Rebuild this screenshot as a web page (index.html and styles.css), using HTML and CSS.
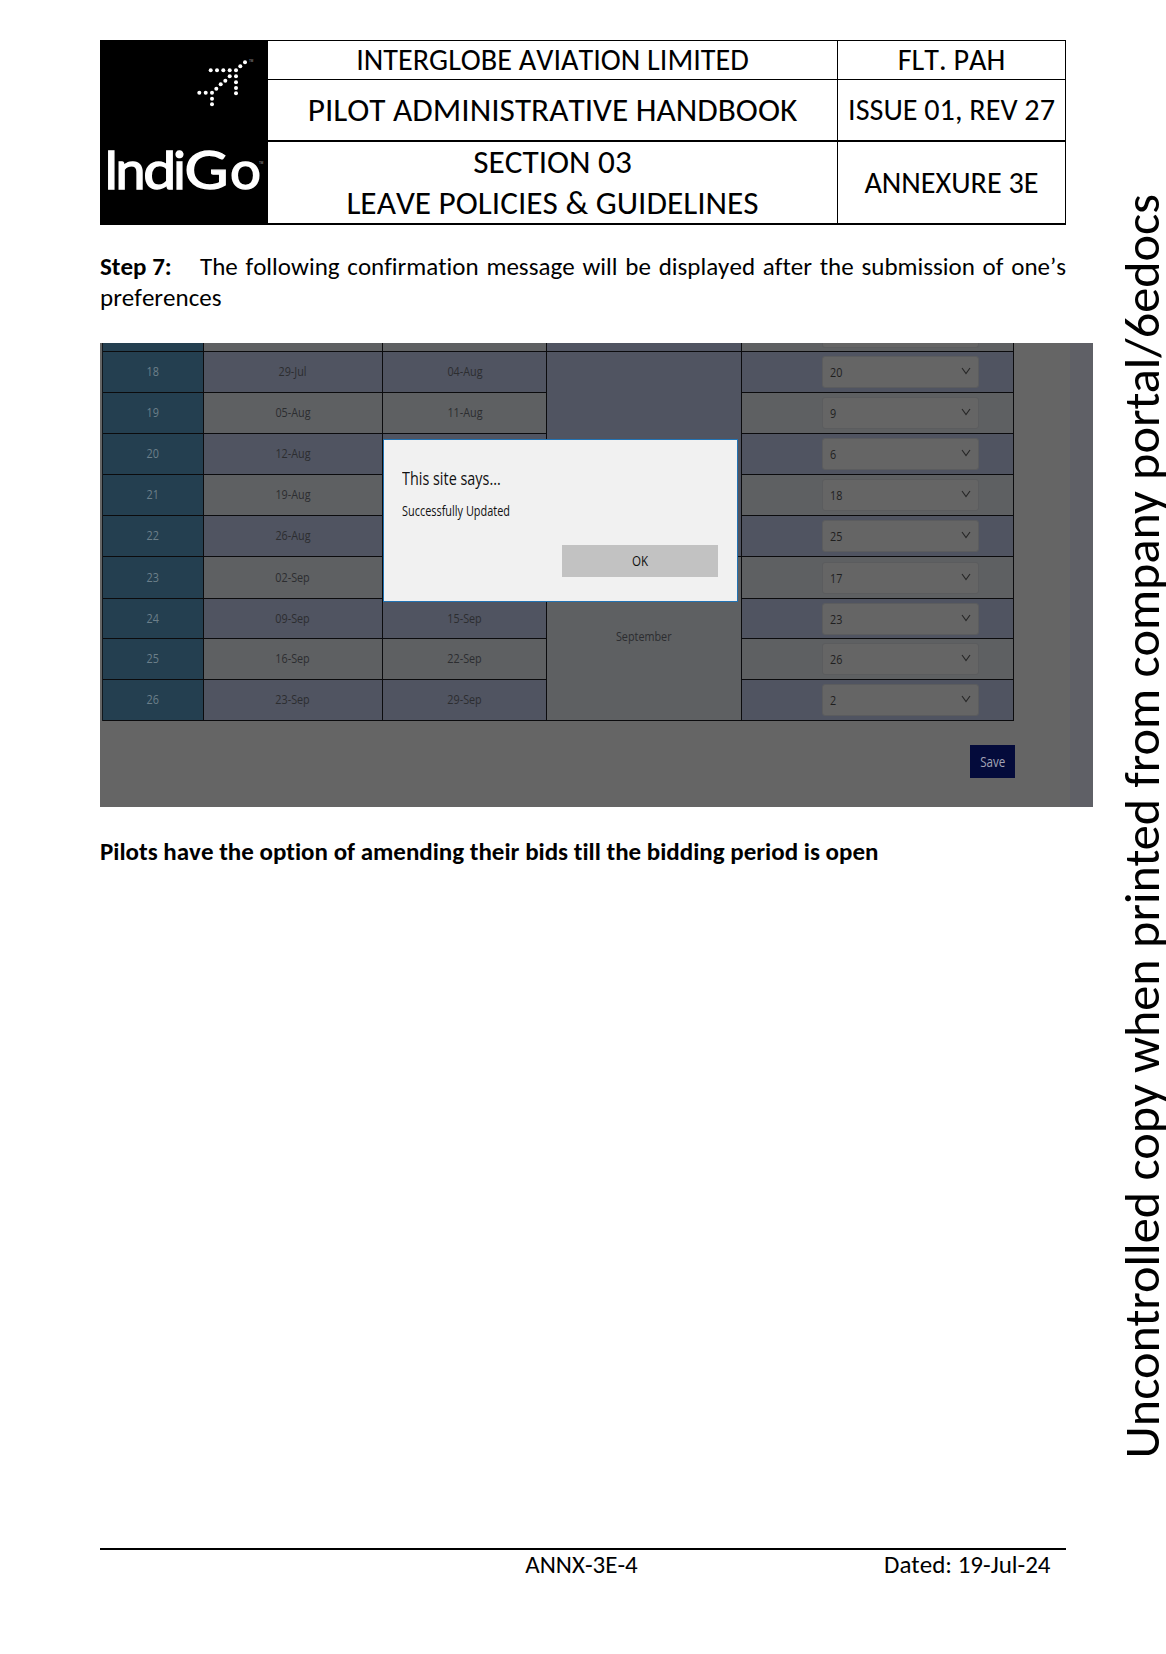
FILE: index.html
```
<!DOCTYPE html>
<html lang="en">
<head>
<meta charset="utf-8">
<title>Pilot Administrative Handbook - Annexure 3E</title>
<link rel="stylesheet" href="styles.css">
</head>
<body>
<div class="page">
  <main class="sheet">
    <header class="masthead">
      <div class="logo">
        <svg viewBox="0 0 168 184" width="168" height="184" role="img" aria-label="IndiGo">
          <g class="logo-dots">
            <circle cx="145" cy="22.3" r="2"/><circle cx="140.3" cy="26.3" r="2"/><circle cx="136" cy="30.3" r="2"/>
            <circle cx="129.7" cy="30.3" r="2"/><circle cx="123.3" cy="30.3" r="2"/><circle cx="117" cy="30.3" r="2"/><circle cx="110.7" cy="30.3" r="2"/>
            <circle cx="136" cy="36.3" r="2"/><circle cx="136" cy="42.3" r="2"/><circle cx="136" cy="48" r="2"/><circle cx="136" cy="53.3" r="2"/>
            <circle cx="129.7" cy="36.3" r="2"/><circle cx="125.3" cy="40.7" r="2"/><circle cx="120.7" cy="44.3" r="2"/><circle cx="116.3" cy="48.7" r="2"/>
            <circle cx="112" cy="52.7" r="2"/><circle cx="105.7" cy="52.7" r="2"/><circle cx="99.3" cy="52.7" r="2"/>
            <circle cx="112" cy="58.7" r="2"/><circle cx="112" cy="64.3" r="2"/>
          </g>
          <text class="logo-word" y="148.7"><tspan x="4">I</tspan><tspan x="15.5" textLength="30" lengthAdjust="spacingAndGlyphs">n</tspan><tspan x="43.3" textLength="33" lengthAdjust="spacingAndGlyphs">d</tspan><tspan x="73.3">i</tspan><tspan x="84.5" textLength="44" lengthAdjust="spacingAndGlyphs">G</tspan><tspan x="130" textLength="31" lengthAdjust="spacingAndGlyphs">o</tspan></text>
          <text class="logo-tm" x="149" y="22">TM</text>
          <text class="logo-tm" x="159" y="124">TM</text>
        </svg>
      </div>
      <div class="cell cell-small">INTERGLOBE AVIATION LIMITED</div>
      <div class="cell cell-small">FLT. PAH</div>
      <div class="cell cell-large">PILOT ADMINISTRATIVE HANDBOOK</div>
      <div class="cell cell-small">ISSUE 01, REV 27</div>
      <div class="cell cell-large">SECTION 03<br>LEAVE POLICIES &amp; GUIDELINES</div>
      <div class="cell cell-small">ANNEXURE 3E</div>
    </header>

    <p class="step"><b class="step-no">Step 7:</b>The following confirmation message will be displayed after the submission of one’s preferences</p>

    <section class="shot">
      <div class="bids">
        <div class="id"></div><div class="odd"></div><div class="odd"></div><div class="month-prev"></div><div class="odd pick"><div class="select select-cut"></div></div>
        <div class="id"><span>18</span></div><div><span>29-Jul</span></div><div><span>04-Aug</span></div><div class="month-aug"></div><div class="pick"><div class="select"><span>20</span><svg viewBox="0 0 10 8"><path d="M1 1l4 5.6L9 1"/></svg></div></div>
        <div class="id"><span>19</span></div><div class="odd"><span>05-Aug</span></div><div class="odd"><span>11-Aug</span></div><div class="odd pick"><div class="select"><span>9</span><svg viewBox="0 0 10 8"><path d="M1 1l4 5.6L9 1"/></svg></div></div>
        <div class="id"><span>20</span></div><div><span>12-Aug</span></div><div></div><div class="pick"><div class="select"><span>6</span><svg viewBox="0 0 10 8"><path d="M1 1l4 5.6L9 1"/></svg></div></div>
        <div class="id"><span>21</span></div><div class="odd"><span>19-Aug</span></div><div class="odd"></div><div class="odd pick"><div class="select"><span>18</span><svg viewBox="0 0 10 8"><path d="M1 1l4 5.6L9 1"/></svg></div></div>
        <div class="id"><span>22</span></div><div><span>26-Aug</span></div><div></div><div class="pick"><div class="select"><span>25</span><svg viewBox="0 0 10 8"><path d="M1 1l4 5.6L9 1"/></svg></div></div>
        <div class="id"><span>23</span></div><div class="odd"><span>02-Sep</span></div><div class="odd"></div><div class="month-sep odd"><span>September</span></div><div class="odd pick"><div class="select"><span>17</span><svg viewBox="0 0 10 8"><path d="M1 1l4 5.6L9 1"/></svg></div></div>
        <div class="id"><span>24</span></div><div><span>09-Sep</span></div><div><span>15-Sep</span></div><div class="pick"><div class="select"><span>23</span><svg viewBox="0 0 10 8"><path d="M1 1l4 5.6L9 1"/></svg></div></div>
        <div class="id"><span>25</span></div><div class="odd"><span>16-Sep</span></div><div class="odd"><span>22-Sep</span></div><div class="odd pick"><div class="select"><span>26</span><svg viewBox="0 0 10 8"><path d="M1 1l4 5.6L9 1"/></svg></div></div>
        <div class="id"><span>26</span></div><div><span>23-Sep</span></div><div><span>29-Sep</span></div><div class="pick"><div class="select"><span>2</span><svg viewBox="0 0 10 8"><path d="M1 1l4 5.6L9 1"/></svg></div></div>
      </div>
      <div class="save"><span>Save</span></div>
      <div class="dialog">
        <div class="dialog-title"><span>This site says...</span></div>
        <div class="dialog-text"><span>Successfully Updated</span></div>
        <div class="dialog-ok"><span>OK</span></div>
      </div>
    </section>

    <p class="note">Pilots have the option of amending their bids till the bidding period is open</p>

    <footer class="foot"><span></span><span class="folio">ANNX-3E-4</span><span class="dated">Dated: 19-Jul-24</span></footer>
  </main>
  <aside class="stamp"><span>Uncontrolled copy when printed from company portal/6edocs</span></aside>
</div>
</body>
</html>
```
FILE: styles.css
```
* { box-sizing: border-box; }
body {
  margin: 0;
  background: #fff;
  color: #000;
  font-family: Calibri, Carlito, Lato, sans-serif;
  font-kerning: none;
  font-variant-ligatures: none;
  overflow: hidden;
}
.page { display: flex; width: 1166px; height: 1654px; overflow: hidden; }
.sheet {
  display: flex;
  flex-direction: column;
  flex: none;
  width: 1093px;
  padding: 40px 0 0 100px;
}

/* Title block */
.masthead {
  display: grid;
  grid-template-columns: 168px 570px 228px;
  grid-template-rows: 39px 62px 83px;
  width: 966px;
  height: 185px;
  border-top: 1px solid #000;
}
.logo { grid-row: 1 / 4; background: #000; margin-top: -1px; }
.logo svg { display: block; }
.logo-dots { fill: #fff; }
.logo-word {
  font: 400 52px Lato, sans-serif;
  fill: #fff;
  stroke: #fff;
  stroke-width: 1.4px;
}
.logo-tm { font: 3px "Liberation Sans", sans-serif; fill: #aaa; }
.cell {
  display: flex;
  align-items: center;
  justify-content: center;
  text-align: center;
  border-right: 1px solid #000;
  border-bottom: 2px solid #000;
  line-height: 1.22;
  white-space: nowrap;
}
.cell:nth-child(2), .cell:nth-child(3) { border-bottom-width: 1px; }
.cell-small { padding-top: 1px; font-size: 30.2px; }
.cell-large { font-size: 33.3px; }

/* Body copy */
.step {
  width: 966px;
  margin: 27px 0 0;
  font-size: 25px;
  line-height: 30.5px;
  text-align: justify;
}
.step-no { display: inline-block; width: 100px; text-align: left; }
.note { margin: 30px 0 0; font-size: 25px; line-height: 30.5px; font-weight: 700; }

/* Dimmed bidding screen */
.shot {
  position: relative;
  flex: none;
  width: 992.5px;
  height: 464px;
  margin-top: 30px;
  padding-left: 2px;
  background: linear-gradient(90deg, #656565 970px, #5f6066 970px);
  font-family: "Open Sans", "Noto Sans", sans-serif;
  font-size: 13.5px;
  line-height: 18px;
  color: #2c2d30;
}
.shot span { display: inline-block; transform: scaleX(0.8); white-space: nowrap; }
.bids {
  display: grid;
  grid-template-columns: 101px 179px 164px 195px 272px;
  grid-template-rows: 9px 41px 41px 41px 41px 41px 42px 40px 41px 41px;
  width: 912px;
  border-left: 1px solid #10171c;
}
.bids > div {
  display: flex;
  align-items: center;
  justify-content: center;
  padding-bottom: 2px;
  background: #505461;
  border-right: 1px solid #0b0b0d;
  border-bottom: 1px solid #0b0b0d;
}
.bids > .odd { background: #5e6062; }
.bids > .id { background: #243f50; color: #6c7f8a; }
.bids > .month-aug { grid-row: 2 / 7; grid-column: 4; }
.bids > .month-sep { grid-row: 7 / 11; grid-column: 4; padding-bottom: 5px; }
.bids > .pick { justify-content: flex-start; padding: 0 0 0 80px; }
.select {
  display: flex;
  align-items: center;
  justify-content: space-between;
  width: 157px;
  height: 32px;
  padding: 0 7px 0 7px;
  border: 1px solid #5b5c5e;
  border-radius: 3px;
  background: #656565;
  color: #1f1f1f;
}
.select span { transform-origin: left; }
.select svg { width: 10px; height: 8px; margin-top: -2px; fill: none; stroke: #262626; stroke-width: 1.1; }
.select-cut { height: 5px; margin-top: -4px; border-top: 0; border-radius: 0 0 3px 3px; }
.save {
  display: flex;
  align-items: center;
  justify-content: center;
  width: 45px;
  height: 33px;
  margin: 24px 0 0 868px;
  background: #040b3b;
  color: #a2a4b5;
  font-size: 14.5px;
}

/* Browser alert */
.dialog {
  position: absolute;
  left: 283px;
  top: 95.5px;
  width: 355px;
  height: 163px;
  padding: 26px 18px 0;
  border: 1.5px solid #2273b3;
  background: #f1f1f1;
  color: #111;
}
.dialog-title { font-size: 18px; line-height: 24px; }
.dialog-text { margin-top: 12px; font-size: 14px; line-height: 18px; }
.dialog-title span, .dialog-text span { transform-origin: left; }
.dialog-text span { transform: scaleX(0.78); }
.dialog-ok {
  display: flex;
  align-items: center;
  justify-content: center;
  width: 156px;
  height: 32px;
  margin: 25px 0 0 160px;
  background: #c2c2c2;
  font-size: 14.5px;
}

/* Running foot */
.foot {
  display: grid;
  grid-template-columns: 1fr auto 1fr;
  width: 966px;
  margin: auto 0 74px;
  border-top: 2px solid #000;
  font-size: 25px;
  line-height: 30.5px;
}
.folio { padding-right: 3px; }
.dated { padding-right: 15.5px; text-align: right; }

/* Margin stamp */
.stamp {
  flex: none;
  margin: 194px 0 0 17.5px;
  writing-mode: vertical-rl;
  font-size: 50.25px;
  line-height: 61px;
  white-space: nowrap;
}
.stamp span { display: inline-block; transform: rotate(180deg); }
```
